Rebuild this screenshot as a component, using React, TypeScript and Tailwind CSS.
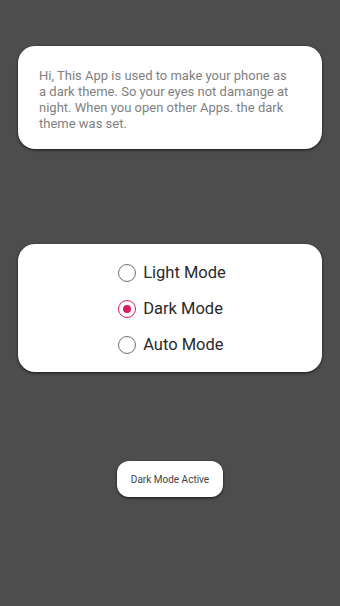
import React from "react";

function Radio({ checked, label }: { checked?: boolean; label: string }) {
  return (
    <div className="flex items-center h-[36px]">
      <span
        className={
          checked
            ? "w-[18px] h-[18px] rounded-full border-[1.8px] border-[#d81b60] flex items-center justify-center"
            : "w-[18px] h-[18px] rounded-full border-[1.8px] border-[#6f6f6f] flex items-center justify-center"
        }
      >
        {checked ? <span className="w-[8px] h-[8px] rounded-full bg-[#d81b60]" /> : null}
      </span>
      <span className="ml-[7px] text-[16.5px] text-[#2a2a2a] leading-none">{label}</span>
    </div>
  );
}

export default function App() {
  return (
    <div
      className="w-[340px] h-[606px] bg-[#4d4d4d] flex flex-col items-center pt-[46px]"
      style={{ fontFamily: "Roboto, 'Noto Sans', sans-serif" }}
    >
      <div className="w-[304px] h-[103px] bg-white rounded-[17px] shadow-[0_1px_3px_rgba(0,0,0,0.7)] pl-[21px] pt-[22px]">
        <p className="w-[256px] text-[13px] leading-[16px] text-[#7f7f7f]">
          Hi, This App is used to make your phone as a dark theme. So your eyes not damange at night. When you open other Apps. the dark theme was set.
        </p>
      </div>
      <div className="mt-[95px] w-[304px] h-[128px] bg-white rounded-[17px] shadow-[0_1px_3px_rgba(0,0,0,0.7)] flex flex-col items-center pt-[11px]">
        <div className="flex flex-col ml-[4px]">
          <Radio label="Light Mode" />
          <Radio label="Dark Mode" checked />
          <Radio label="Auto Mode" />
        </div>
      </div>
      <div className="mt-[89px] w-[106px] h-[36px] bg-white rounded-[12px] shadow-[0_1px_3px_rgba(0,0,0,0.7)] flex items-center justify-center">
        <span className="text-[10px] text-[#444]">Dark Mode Active</span>
      </div>
    </div>
  );
}
